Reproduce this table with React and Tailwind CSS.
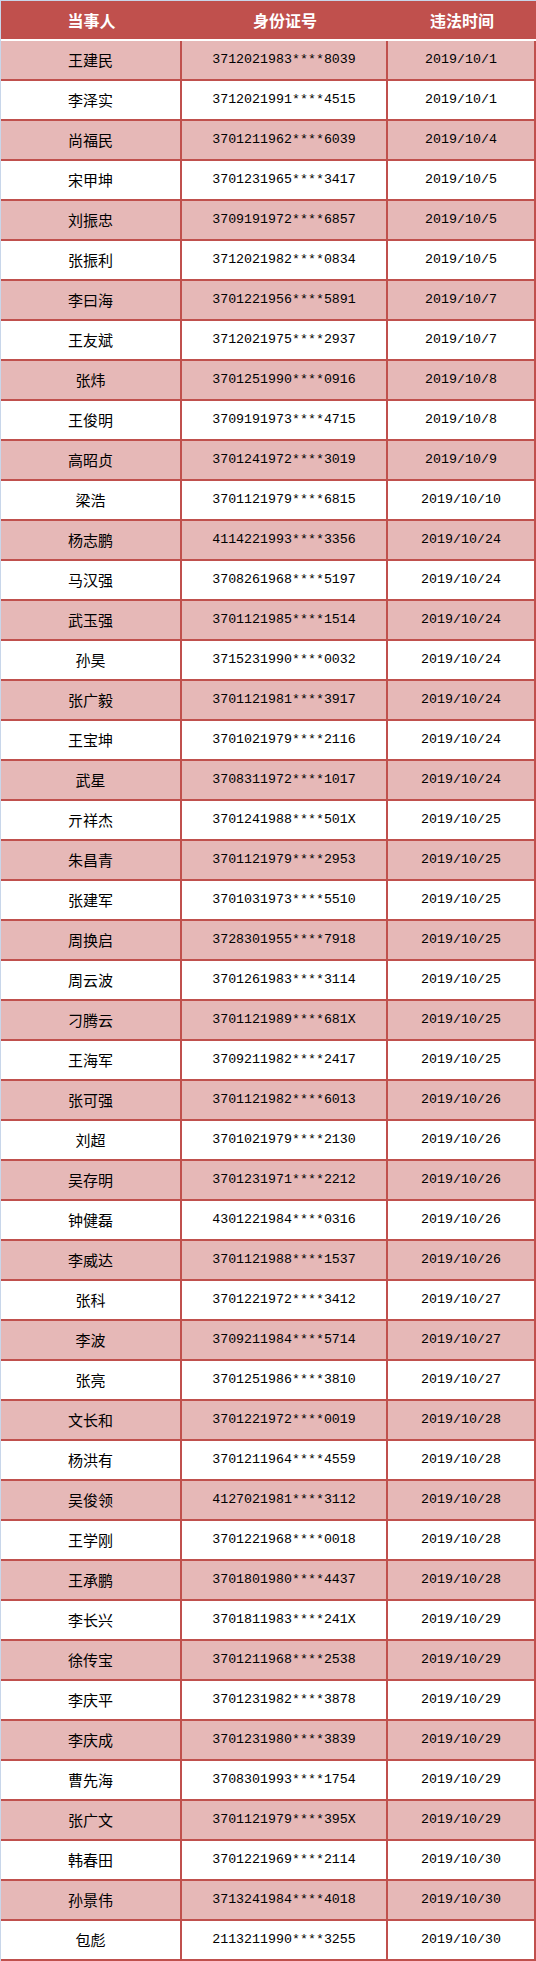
const rows = [
  ["王建民", "3712021983****8039", "2019/10/1"],
  ["李泽实", "3712021991****4515", "2019/10/1"],
  ["尚福民", "3701211962****6039", "2019/10/4"],
  ["宋甲坤", "3701231965****3417", "2019/10/5"],
  ["刘振忠", "3709191972****6857", "2019/10/5"],
  ["张振利", "3712021982****0834", "2019/10/5"],
  ["李曰海", "3701221956****5891", "2019/10/7"],
  ["王友斌", "3712021975****2937", "2019/10/7"],
  ["张炜", "3701251990****0916", "2019/10/8"],
  ["王俊明", "3709191973****4715", "2019/10/8"],
  ["高昭贞", "3701241972****3019", "2019/10/9"],
  ["梁浩", "3701121979****6815", "2019/10/10"],
  ["杨志鹏", "4114221993****3356", "2019/10/24"],
  ["马汉强", "3708261968****5197", "2019/10/24"],
  ["武玉强", "3701121985****1514", "2019/10/24"],
  ["孙昊", "3715231990****0032", "2019/10/24"],
  ["张广毅", "3701121981****3917", "2019/10/24"],
  ["王宝坤", "3701021979****2116", "2019/10/24"],
  ["武星", "3708311972****1017", "2019/10/24"],
  ["亓祥杰", "3701241988****501X", "2019/10/25"],
  ["朱昌青", "3701121979****2953", "2019/10/25"],
  ["张建军", "3701031973****5510", "2019/10/25"],
  ["周换启", "3728301955****7918", "2019/10/25"],
  ["周云波", "3701261983****3114", "2019/10/25"],
  ["刁腾云", "3701121989****681X", "2019/10/25"],
  ["王海军", "3709211982****2417", "2019/10/25"],
  ["张可强", "3701121982****6013", "2019/10/26"],
  ["刘超", "3701021979****2130", "2019/10/26"],
  ["吴存明", "3701231971****2212", "2019/10/26"],
  ["钟健磊", "4301221984****0316", "2019/10/26"],
  ["李威达", "3701121988****1537", "2019/10/26"],
  ["张科", "3701221972****3412", "2019/10/27"],
  ["李波", "3709211984****5714", "2019/10/27"],
  ["张亮", "3701251986****3810", "2019/10/27"],
  ["文长和", "3701221972****0019", "2019/10/28"],
  ["杨洪有", "3701211964****4559", "2019/10/28"],
  ["吴俊领", "4127021981****3112", "2019/10/28"],
  ["王学刚", "3701221968****0018", "2019/10/28"],
  ["王承鹏", "3701801980****4437", "2019/10/28"],
  ["李长兴", "3701811983****241X", "2019/10/29"],
  ["徐传宝", "3701211968****2538", "2019/10/29"],
  ["李庆平", "3701231982****3878", "2019/10/29"],
  ["李庆成", "3701231980****3839", "2019/10/29"],
  ["曹先海", "3708301993****1754", "2019/10/29"],
  ["张广文", "3701121979****395X", "2019/10/29"],
  ["韩春田", "3701221969****2114", "2019/10/30"],
  ["孙景伟", "3713241984****4018", "2019/10/30"],
  ["包彪", "2113211990****3255", "2019/10/30"],
];

const App = () => {
  return (
    <div className="w-[536px] border-t border-l border-[#c8d6ea] bg-white">
      {/* header */}
      <div className="flex h-[40px] bg-[#c0504d] border-b-2 border-white text-white font-bold text-[16px] font-['Noto_Sans_CJK_SC',sans-serif]">
        <div className="w-[181px] flex items-center justify-center">当事人</div>
        <div className="w-[206px] flex items-center justify-center">身份证号</div>
        <div className="w-[148px] flex items-center justify-center">违法时间</div>
      </div>

      {rows.map((r, i) => (
        <div
          key={r[1]}
          className={`flex h-[40px] border-b-2 border-[#c0504d] text-black ${i % 2 === 0 ? "bg-[#e6b8b7]" : "bg-white"}`}
        >
          <div className="w-[181px] border-r-2 border-[#c0504d] flex items-center justify-center text-[15px] font-['Noto_Sans_CJK_SC',sans-serif]">
            {r[0]}
          </div>
          <div className="w-[206px] border-r-2 border-[#c0504d] flex items-center justify-center text-[13.3px] font-['Liberation_Mono',monospace]">
            {r[1]}
          </div>
          <div className="w-[148px] border-r-2 border-[#c0504d] flex items-center justify-center text-[13.3px] font-['Liberation_Mono',monospace]">
            {r[2]}
          </div>
        </div>
      ))}
    </div>
  );
};

export default App;
